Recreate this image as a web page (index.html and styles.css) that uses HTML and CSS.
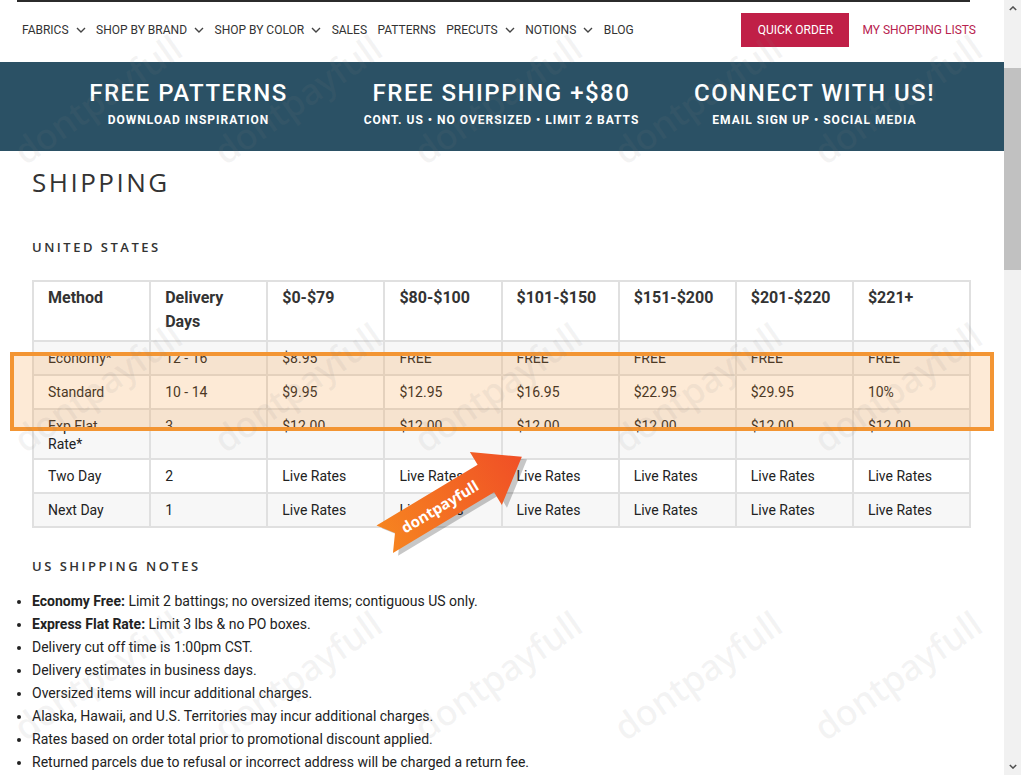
FILE: index.html
```html
<!DOCTYPE html>
<html>
<head>
<meta charset="utf-8">
<title>Shipping</title>
<link rel="stylesheet" href="styles.css">
</head>
<body>
<div class="window">
  <div class="page">
    <header class="site-header">
      <div class="topline"></div>
      <nav class="nav">
        <ul class="menu">
          <li>FABRICS <svg class="chev" viewBox="0 0 10 6"><path d="M1 1l4 4 4-4"/></svg></li>
          <li>SHOP BY BRAND <svg class="chev" viewBox="0 0 10 6"><path d="M1 1l4 4 4-4"/></svg></li>
          <li>SHOP BY COLOR <svg class="chev" viewBox="0 0 10 6"><path d="M1 1l4 4 4-4"/></svg></li>
          <li>SALES</li>
          <li>PATTERNS</li>
          <li>PRECUTS <svg class="chev" viewBox="0 0 10 6"><path d="M1 1l4 4 4-4"/></svg></li>
          <li>NOTIONS <svg class="chev" viewBox="0 0 10 6"><path d="M1 1l4 4 4-4"/></svg></li>
          <li>BLOG</li>
        </ul>
        <div class="actions">
          <a class="quick-order">QUICK ORDER</a>
          <a class="lists">MY SHOPPING LISTS</a>
        </div>
      </nav>
    </header>

    <section class="banner">
      <div class="promo">
        <div class="promo-title">FREE PATTERNS</div>
        <div class="promo-sub">DOWNLOAD INSPIRATION</div>
      </div>
      <div class="promo">
        <div class="promo-title">FREE SHIPPING +$80</div>
        <div class="promo-sub">CONT. US • NO OVERSIZED • LIMIT 2 BATTS</div>
      </div>
      <div class="promo">
        <div class="promo-title">CONNECT WITH US!</div>
        <div class="promo-sub">EMAIL SIGN UP • SOCIAL MEDIA</div>
      </div>
    </section>

    <main class="content">
      <h1 class="page-title">SHIPPING</h1>
      <h2 class="section-title">UNITED STATES</h2>

      <div class="table-wrap">
        <table class="rates">
          <thead>
            <tr>
              <th>Method</th>
              <th>Delivery Days</th>
              <th>$0-$79</th>
              <th>$80-$100</th>
              <th>$101-$150</th>
              <th>$151-$200</th>
              <th>$201-$220</th>
              <th>$221+</th>
            </tr>
          </thead>
          <tbody>
            <tr class="alt">
              <td>Economy*</td><td>12 - 16</td><td>$8.95</td><td>FREE</td><td>FREE</td><td>FREE</td><td>FREE</td><td>FREE</td>
            </tr>
            <tr>
              <td>Standard</td><td>10 - 14</td><td>$9.95</td><td>$12.95</td><td>$16.95</td><td>$22.95</td><td>$29.95</td><td>10%</td>
            </tr>
            <tr class="alt two-line">
              <td>Exp Flat Rate*</td><td>3</td><td>$12.00</td><td>$12.00</td><td>$12.00</td><td>$12.00</td><td>$12.00</td><td>$12.00</td>
            </tr>
            <tr>
              <td>Two Day</td><td>2</td><td>Live Rates</td><td>Live Rates</td><td>Live Rates</td><td>Live Rates</td><td>Live Rates</td><td>Live Rates</td>
            </tr>
            <tr class="alt">
              <td>Next Day</td><td>1</td><td>Live Rates</td><td>Live Rates</td><td>Live Rates</td><td>Live Rates</td><td>Live Rates</td><td>Live Rates</td>
            </tr>
          </tbody>
        </table>
        <div class="highlight"></div>
        <svg class="arrow" width="200" height="130" viewBox="-100 -65 200 130">
          <defs>
            <linearGradient id="ag" x1="0" y1="0" x2="1" y2="0">
              <stop offset="0" stop-color="#f68420"/>
              <stop offset="1" stop-color="#f04f26"/>
            </linearGradient>
          </defs>
          <g transform="rotate(-31)">
            <polygon points="-82,-16 36,-16 36,-31 78,0 36,31 36,16 -82,16 -70,0" fill="rgba(0,0,0,0.22)" transform="translate(3,5)"/>
            <polygon points="-82,-16 36,-16 36,-31 78,0 36,31 36,16 -82,16 -70,0" fill="url(#ag)"/>
            <text x="-18" y="6" class="arrow-text" text-anchor="middle">dontpayfull</text>
          </g>
        </svg>
      </div>

      <h2 class="section-title notes-title">US SHIPPING NOTES</h2>
      <ul class="notes">
        <li><b>Economy Free:</b> Limit 2 battings; no oversized items; contiguous US only.</li>
        <li><b>Express Flat Rate:</b> Limit 3 lbs &amp; no PO boxes.</li>
        <li>Delivery cut off time is 1:00pm CST.</li>
        <li>Delivery estimates in business days.</li>
        <li>Oversized items will incur additional charges.</li>
        <li>Alaska, Hawaii, and U.S. Territories may incur additional charges.</li>
        <li>Rates based on order total prior to promotional discount applied.</li>
        <li>Returned parcels due to refusal or incorrect address will be charged a return fee.</li>
      </ul>
    </main>

    <div class="watermarks" aria-hidden="true">
      <span>dontpayfull</span><span>dontpayfull</span><span>dontpayfull</span><span>dontpayfull</span><span>dontpayfull</span>
      <span>dontpayfull</span><span>dontpayfull</span><span>dontpayfull</span><span>dontpayfull</span><span>dontpayfull</span>
      <span>dontpayfull</span><span>dontpayfull</span><span>dontpayfull</span><span>dontpayfull</span><span>dontpayfull</span>
    </div>
  </div>
  <div class="scrollbar">
    <svg class="sb-arrow" viewBox="0 0 10 6"><path d="M1 5l4-4 4 4"/></svg>
    <div class="sb-track"><div class="sb-thumb"></div></div>
    <svg class="sb-arrow" viewBox="0 0 10 6"><path d="M1 1l4 4 4-4"/></svg>
  </div>
</div>
</body>
</html>
```

FILE: styles.css
```css
* { box-sizing: border-box; }
html, body { margin: 0; padding: 0; }
body {
  font-family: Roboto, "Liberation Sans", Arial, sans-serif;
  color: #333;
  background: #fff;
}
.window {
  display: flex;
  width: 1021px;
  height: 775px;
  overflow: hidden;
}
.page {
  position: relative;
  width: 1004px;
  flex: none;
  height: 775px;
  overflow: hidden;
}

/* header */
.site-header { height: 62px; }
.topline {
  margin: 0 34px 0 17px;
  height: 2px;
  background: #2b2b2b;
}
.nav {
  margin: 0 17px;
  height: 56px;
  display: flex;
  align-items: center;
  padding: 0 11px 0 5px;
}
.menu {
  list-style: none;
  margin: 0;
  padding: 0;
  display: flex;
  gap: 10.5px;
  font-size: 12px;
  color: #333;
}
.menu li {
  display: flex;
  align-items: center;
  gap: 7px;
  white-space: nowrap;
}
.chev {
  width: 10px;
  height: 6px;
  fill: none;
  stroke: #444;
  stroke-width: 1.4;
}
.actions {
  margin-left: auto;
  display: flex;
  align-items: center;
  gap: 13px;
  font-size: 12px;
}
.quick-order {
  background: #c01f47;
  color: #fff;
  height: 34px;
  width: 108px;
  display: flex;
  align-items: center;
  justify-content: center;
}
.lists { color: #b8234f; }

/* banner */
.banner {
  background: #2b5165;
  height: 89px;
  display: grid;
  grid-template-columns: repeat(3, 1fr);
  padding: 0 33px 0 32px;
  color: #fff;
  text-align: center;
}
.promo { padding-top: 17px; }
.promo-title {
  font-size: 24px;
  font-weight: 500;
  line-height: 28px;
  letter-spacing: 1.5px;
}
.promo-sub {
  margin-top: 5px;
  font-size: 12px;
  font-weight: 700;
  line-height: 16px;
  letter-spacing: 1px;
}

/* content */
.content {
  padding: 0 33px 0 32px;
}
.page-title {
  margin: 14px 0 0;
  font-family: "Open Sans", "Liberation Sans", sans-serif;
  font-weight: 400;
  font-size: 26px;
  line-height: 34px;
  letter-spacing: 2.5px;
  color: #333;
}
.section-title {
  margin: 39px 0 0;
  font-family: "Open Sans", "Liberation Sans", sans-serif;
  font-weight: 600;
  font-size: 13px;
  line-height: 18px;
  letter-spacing: 2.5px;
  color: #333;
}
.table-wrap {
  position: relative;
  margin-top: 24px;
}
.rates {
  width: 939px;
  border-collapse: collapse;
  table-layout: fixed;
  font-size: 14px;
  border: 2px solid #e0e0e0;
}
.rates th, .rates td {
  border: 2px solid #e0e0e0;
  text-align: left;
  vertical-align: top;
  padding: 7px 14px 7px 14px;
  line-height: 18px;
}
.rates tr.two-line td {
  padding-bottom: 5px;
}
.rates th {
  font-size: 16px;
  font-weight: 700;
  line-height: 24px;
  padding: 4px 14px 6px;
  color: #333;
}
.rates td { color: #222; }
.rates tr.alt td { background: #f7f7f7; }

.highlight {
  position: absolute;
  left: -22px;
  right: -23px;
  top: 72px;
  height: 79px;
  border: 4px solid #f39533;
  background: rgba(243, 149, 51, 0.2);
}
.arrow {
  position: absolute;
  left: 323px;
  top: 152px;
  overflow: visible;
}
.arrow-text {
  font-family: "Open Sans", sans-serif;
  font-size: 15px;
  font-weight: 700;
  fill: #fff;
}

.notes-title { margin-top: 29px; }
.notes {
  margin: 15px 0 0;
  padding: 0;
  list-style: disc;
  font-size: 14px;
  line-height: 23px;
  color: #222;
}
.notes b { font-weight: 700; }

/* watermark overlay */
.watermarks {
  position: absolute;
  left: -3px;
  top: -45px;
  width: 1000px;
  display: grid;
  grid-template-columns: repeat(5, 200px);
  grid-auto-rows: 288px;
  pointer-events: none;
}
.watermarks span {
  display: flex;
  align-items: center;
  justify-content: center;
  font-family: "Open Sans", sans-serif;
  font-weight: 600;
  font-size: 36px;
  letter-spacing: -0.5px;
  color: rgba(130, 130, 130, 0.09);
  transform: rotate(-35deg);
}

/* fake scrollbar */
.scrollbar {
  width: 17px;
  flex: none;
  background: #f1f1f1;
  display: flex;
  flex-direction: column;
  align-items: center;
}
.sb-arrow {
  flex: none;
  width: 8px;
  height: 5px;
  margin: 6px 0;
  fill: none;
  stroke: #505050;
  stroke-width: 1.8;
}
.sb-track {
  flex: 1;
  width: 100%;
  padding-top: 51px;
}
.sb-thumb {
  height: 202px;
  background: #c1c1c1;
}
```
